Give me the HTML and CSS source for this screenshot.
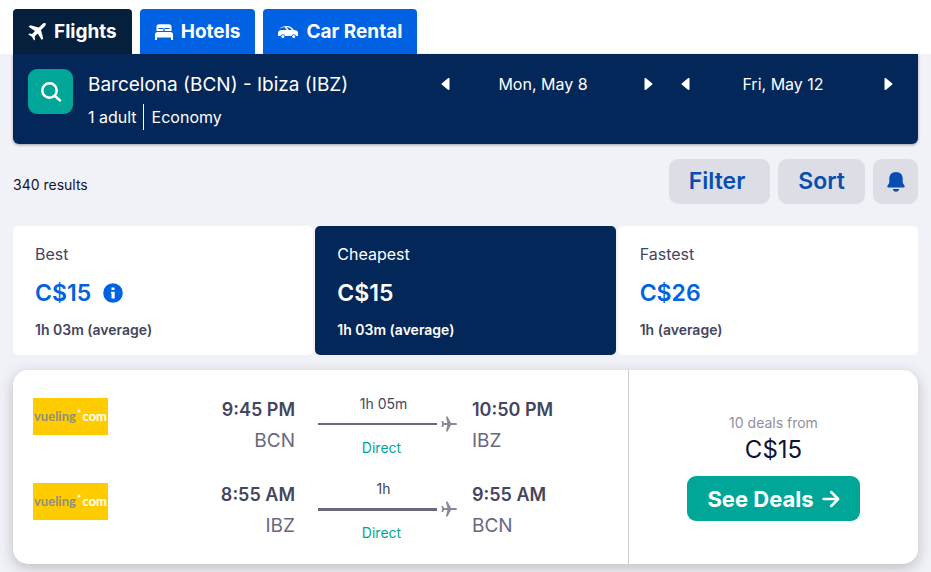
FILE: index.html
```
<!DOCTYPE html>
<html lang="en">
<head>
<meta charset="UTF-8">
<meta name="viewport" content="width=device-width, initial-scale=1.0">
<title>Barcelona to Ibiza flights</title>
<link rel="stylesheet" href="styles.css">
</head>
<body>
<header class="top-bar">
  <nav class="product-nav">
    <a href="#flights" class="product-link active">
      <svg class="icon" width="18" height="18" viewBox="0 0 18 18"><path d="M17.600.400c-.8-.7-2.200-.4-3.100.5l-3.700 3.600L2.300 2.200.6 3.700l6.400 4.200-2.900 3-2.800-.4L.3 11.500l3.600 2.200 2.200 3.700 1-1-.4-2.900 3-2.900 4 6.500 1.500-1.700-2.200-8.400 3.600-3.600c.9-.9 1.700-2.300 1-3z"/></svg>
      <span>Flights</span>
    </a>
    <a href="#hotels" class="product-link">
      <svg class="icon" width="18" height="18" viewBox="0 0 18 18"><path d="M4 1.200h10A2.500 2.500 0 0 1 16.500 3.700V8H1.500V3.700A2.500 2.500 0 0 1 4 1.200zM2.500 9h13A2.500 2.500 0 0 1 18 11.500V17h-2v-2.500H2V17H0v-5.500A2.500 2.500 0 0 1 2.500 9z"/><path d="M3.500 5.500h4.800M9.700 5.500h4.800M9 5.500v2.500" fill="none" stroke="#0062e3" stroke-width="1.200"/></svg>
      <span>Hotels</span>
    </a>
    <a href="#cars" class="product-link">
      <svg class="icon" width="20" height="18" viewBox="0 0 20 18"><path d="M1 6C3.500 3.700 6 3 9 3c3 0 4.800 1.200 6.600 3.800l2.700.7c1.100.4 1.700 1.200 1.700 2.300v2.400c0 .5-.3.800-.8.800h-1.100a2.500 2.500 0 0 0-4.700 0H7.200a2.500 2.500 0 0 0-4.700 0H.8c-.5 0-.8-.3-.8-.8v-2c0-2 1.500-3.200 3.500-3.200h5.200L6.800 4.300C4.800 4.300 2.800 4.900 1 6zm7.500-1.700L10.800 7H14c-1.500-2-3-2.700-5.500-2.700z"/><circle cx="4.900" cy="13.500" r="1.500"/><circle cx="15.700" cy="13.500" r="1.500"/></svg>
      <span>Car Rental</span>
    </a>
  </nav>
</header>

<main class="page">
  <section class="search-panel">
    <button class="search-button" aria-label="Edit search">
      <svg width="22" height="22" viewBox="0 0 22 22" fill="none" stroke="#fff" stroke-width="2.500" stroke-linecap="round"><circle cx="9.500" cy="9.500" r="7.200"/><path d="M15 15l5 4.500"/></svg>
    </button>
    <div class="search-summary">
      <h1>Barcelona (BCN) - Ibiza (IBZ)</h1>
      <div class="search-details"><span class="travellers">1 adult</span><span>Economy</span></div>
    </div>
    <div class="date-nav">
      <button aria-label="Previous departure day"><svg width="9" height="12" viewBox="0 0 9 12"><path d="M7 .3C7.800-.3 8.500.3 8.500 1v10c0 .7-.7 1.300-1.500.7L1 6.800a1 1 0 0 1 0-1.600z"/></svg></button>
      <span class="date">Mon, May 8</span>
      <button aria-label="Next departure day"><svg width="9" height="12" viewBox="0 0 9 12"><path d="M2 .3C1.200-.3.500.3.500 1v10c0 .7.7 1.300 1.500.7l6-4.900a1 1 0 0 0 0-1.600z"/></svg></button>
    </div>
    <div class="date-nav">
      <button aria-label="Previous return day"><svg width="9" height="12" viewBox="0 0 9 12"><path d="M7 .3C7.800-.3 8.500.3 8.500 1v10c0 .7-.7 1.300-1.500.7L1 6.800a1 1 0 0 1 0-1.600z"/></svg></button>
      <span class="date">Fri, May 12</span>
      <button aria-label="Next return day"><svg width="9" height="12" viewBox="0 0 9 12"><path d="M2 .3C1.200-.3.500.3.500 1v10c0 .7.7 1.300 1.500.7l6-4.900a1 1 0 0 0 0-1.600z"/></svg></button>
    </div>
  </section>

  <div class="toolbar">
    <span class="result-count">340 results</span>
    <button class="tool-button filter">Filter</button>
    <button class="tool-button">Sort</button>
    <button class="tool-button bell" aria-label="Price alerts">
      <svg width="18" height="20" viewBox="0 0 18 20"><path d="M9 0c4 0 6.700 2.800 6.700 6.500v3.300c0 1 .3 1.800 1 2.600.7.800 1 1.300 1 1.900 0 .8-.6 1.200-1.200 1.200h-15c-.6 0-1.200-.4-1.200-1.200 0-.6.300-1.100 1-1.900s1-1.600 1-2.600V6.500C2.300 2.800 5 0 9 0zM6 17h6c0 1.700-1.300 2.800-3 2.800S6 18.700 6 17z"/></svg>
    </button>
  </div>

  <!-- Sort tabs -->
  <div class="sort-tabs" role="tablist">
    <button class="sort-tab" role="tab" aria-selected="false">
      <span class="sort-label">Best</span>
      <span class="sort-price">C$15
        <svg width="20" height="20" viewBox="0 0 20 20"><circle cx="10" cy="10" r="9.800"/><path fill="#fff" d="M8 8.700h3.700v6.800H8.500v-5H8zM8.500 4.500h3v2.600h-3z"/></svg>
      </span>
      <span class="sort-time">1h 03m (average)</span>
    </button>
    <button class="sort-tab selected" role="tab" aria-selected="true">
      <span class="sort-label">Cheapest</span>
      <span class="sort-price">C$15</span>
      <span class="sort-time">1h 03m (average)</span>
    </button>
    <button class="sort-tab" role="tab" aria-selected="false">
      <span class="sort-label">Fastest</span>
      <span class="sort-price">C$26</span>
      <span class="sort-time">1h (average)</span>
    </button>
  </div>

  <article class="ticket">
    <div class="legs">
      <div class="leg">
        <svg class="airline" width="75" height="37" viewBox="0 0 75 37" role="img" aria-label="vueling.com"><rect width="75" height="37" fill="#fc0"/><text x="1" y="23" class="logo-name">vueling</text><circle cx="46" cy="13" r="1.500" fill="#fff"/><text x="74" y="23" class="logo-com">com</text></svg>
        <div class="stop depart"><span class="time">9:45 PM</span><span class="airport">BCN</span></div>
        <div class="route">
          <span class="duration">1h 05m</span>
          <span class="line"></span>
          <svg class="plane" width="16" height="16" viewBox="0 0 16 16"><path d="M16 8c0 .7-.7 1.100-1.600 1.100H10L6.500 15.500H4.900l1.500-6.400H3.200L1.800 11H.4L1.200 8 .4 5h1.400l1.400 1.900h3.200L4.900.5h1.600L10 6.900h4.400c.9 0 1.600.4 1.600 1.100z"/></svg>
          <span class="direct">Direct</span>
        </div>
        <div class="stop"><span class="time">10:50 PM</span><span class="airport">IBZ</span></div>
      </div>
      <div class="leg">
        <svg class="airline" width="75" height="37" viewBox="0 0 75 37" role="img" aria-label="vueling.com"><rect width="75" height="37" fill="#fc0"/><text x="1" y="23" class="logo-name">vueling</text><circle cx="46" cy="13" r="1.500" fill="#fff"/><text x="74" y="23" class="logo-com">com</text></svg>
        <div class="stop depart"><span class="time">8:55 AM</span><span class="airport">IBZ</span></div>
        <div class="route">
          <span class="duration">1h</span>
          <span class="line return"></span>
          <svg class="plane" width="16" height="16" viewBox="0 0 16 16"><path d="M16 8c0 .7-.7 1.100-1.600 1.100H10L6.500 15.500H4.900l1.500-6.400H3.200L1.800 11H.4L1.200 8 .4 5h1.400l1.400 1.900h3.200L4.900.5h1.600L10 6.900h4.400c.9 0 1.600.4 1.600 1.100z"/></svg>
          <span class="direct">Direct</span>
        </div>
        <div class="stop"><span class="time">9:55 AM</span><span class="airport">BCN</span></div>
      </div>
    </div>
    <div class="deal">
      <span class="deal-count">10 deals from</span>
      <span class="deal-price">C$15</span>
      <button class="deal-button">See Deals
        <svg width="18" height="18" viewBox="0 0 18 18" fill="none" stroke="#fff" stroke-width="2.500" stroke-linecap="round" stroke-linejoin="round"><path d="M1.500 9h14.500M9.200 2l7 7-7 7"/></svg>
      </button>
    </div>
  </article>
</main>
</body>
</html>
```
FILE: styles.css
```
* {
  box-sizing: border-box;
}
body {
  margin: 0;
  background-color: #f1f2f8;
  color: #111236;
  font-family: Inter, "Liberation Sans", sans-serif;
  font-size: 16px;
}
button {
  border: none;
  padding: 0;
  background: none;
  color: inherit;
  font-family: inherit;
  cursor: pointer;
}
svg {
  flex-shrink: 0;
}

/* Product tabs */
.top-bar {
  background-color: #fff;
  padding: 9px 13px 0;
}
.product-nav {
  display: flex;
  gap: 8px;
}
.product-link {
  display: flex;
  align-items: center;
  gap: 8px;
  height: 45px;
  padding: 0 15px;
  border-radius: 4px 4px 0 0;
  background-color: #0062e3;
  color: #fff;
  font-size: 19px;
  font-weight: 700;
  text-decoration: none;
}
.product-link.active {
  background-color: #05203c;
}
.icon {
  fill: #fff;
}

.page {
  padding: 0 13px 8px;
}

/* Search summary */
.search-panel {
  display: grid;
  grid-template-columns: 45px 1fr 240px 240px;
  align-items: start;
  padding: 15px 15px 14px;
  border-radius: 0 0 6px 6px;
  background-color: #042759;
  color: #fff;
  box-shadow: 0 1px 3px rgba(37, 32, 31, 0.4);
}
.search-button {
  display: flex;
  align-items: center;
  justify-content: center;
  width: 45px;
  height: 45px;
  border-radius: 9px;
  background-color: #00a698;
}
.search-summary {
  padding-left: 15px;
}
.search-summary h1 {
  margin: 0 0 4px;
  font-size: 19px;
  font-weight: 400;
  line-height: 31px;
  white-space: nowrap;
}
.search-details {
  display: flex;
  font-size: 16px;
  line-height: 26px;
}
.travellers {
  margin-right: 8px;
  padding-right: 6px;
  border-right: 1px solid #fff;
}
.date-nav {
  display: flex;
  align-items: center;
  justify-content: space-between;
  height: 30px;
  padding: 0 10px 0 18px;
}
.date-nav button {
  display: flex;
}
.date-nav svg {
  fill: #fff;
}
.date {
  padding-right: 8px;
}

/* Results toolbar */
.toolbar {
  display: flex;
  align-items: center;
  gap: 8px;
  margin: 15px 0 22px;
}
.result-count {
  flex: 1;
  padding-top: 6px;
  font-size: 14px;
}
.tool-button {
  height: 45px;
  padding: 0 20px 2px;
  border-radius: 9px;
  background-color: #dddde5;
  color: #084eb2;
  font-size: 23px;
  font-weight: 600;
}
.filter {
  padding-right: 25px;
}
.bell {
  display: flex;
  align-items: center;
  justify-content: center;
  width: 45px;
  padding: 0;
}
.bell svg {
  fill: #084eb2;
}

/* Sort tabs */
.sort-tabs {
  display: grid;
  grid-template-columns: repeat(3, 1fr);
  gap: 2px;
}
.sort-tab {
  display: flex;
  flex-direction: column;
  padding: 18px 22px 15px;
  border-radius: 5px;
  background-color: #fff;
  color: #444560;
  text-align: left;
}
.sort-tab.selected {
  background-color: #042759;
  color: #fff;
}
.sort-label {
  font-size: 16px;
  line-height: 20px;
}
.sort-price {
  display: flex;
  align-items: center;
  gap: 12px;
  margin: 14px 0 12px;
  color: #0062e3;
  font-size: 23px;
  font-weight: 600;
  line-height: 30px;
}
.sort-price svg {
  fill: #0062e3;
}
.selected .sort-price {
  color: #fff;
}
.sort-time {
  font-size: 14px;
  font-weight: 600;
  line-height: 20px;
}

/* Ticket */
.ticket {
  display: flex;
  margin-top: 15px;
  border-radius: 15px;
  background-color: #fff;
  box-shadow: 0 4px 14px rgba(37, 32, 31, 0.25);
}
.legs {
  flex: 1;
  padding: 12px 20px;
}
.leg {
  display: grid;
  grid-template-columns: 75px 1fr 177px 136px;
  align-items: center;
  height: 85px;
}
.airline {
  margin-bottom: 16px;
}
.logo-name {
  fill: #8f8f80;
  font: 700 13px Lato, sans-serif;
}
.logo-com {
  fill: #fff;
  font: 700 13px Lato, sans-serif;
  text-anchor: end;
}
.stop {
  display: flex;
  flex-direction: column;
  line-height: 31px;
}
.depart {
  text-align: right;
}
.time {
  color: #444560;
  font-size: 18px;
  font-weight: 600;
}
.airport {
  color: #68697f;
  font-size: 19px;
}
.route {
  display: grid;
  grid-template-columns: 119px 16px;
  column-gap: 4px;
  align-items: center;
  padding: 3px 0 0 23px;
  font-size: 14px;
  line-height: 20px;
}
.duration, .direct {
  grid-column: 1 / 3;
  color: #444560;
  text-align: center;
}
.duration {
  margin-right: 8px;
  padding-bottom: 2px;
}
.line {
  height: 2px;
  background-color: #68697f;
}
.line.return {
  height: 3px;
}
.plane {
  fill: #8c8796;
}
.direct {
  margin-right: 12px;
  padding-top: 6px;
  color: #00a698;
}
.deal {
  display: flex;
  flex-direction: column;
  align-items: center;
  justify-content: center;
  width: 290px;
  border-left: 1px solid #cdcdd7;
}
.deal-count {
  color: #8f90a0;
  font-size: 14px;
  line-height: 20px;
}
.deal-price {
  font-size: 24px;
  line-height: 34px;
}
.deal-button {
  display: flex;
  align-items: center;
  gap: 8px;
  height: 45px;
  margin-top: 9px;
  padding: 0 20px;
  border-radius: 9px;
  background-color: #00a698;
  color: #fff;
  font-size: 22px;
  font-weight: 700;
}
```
